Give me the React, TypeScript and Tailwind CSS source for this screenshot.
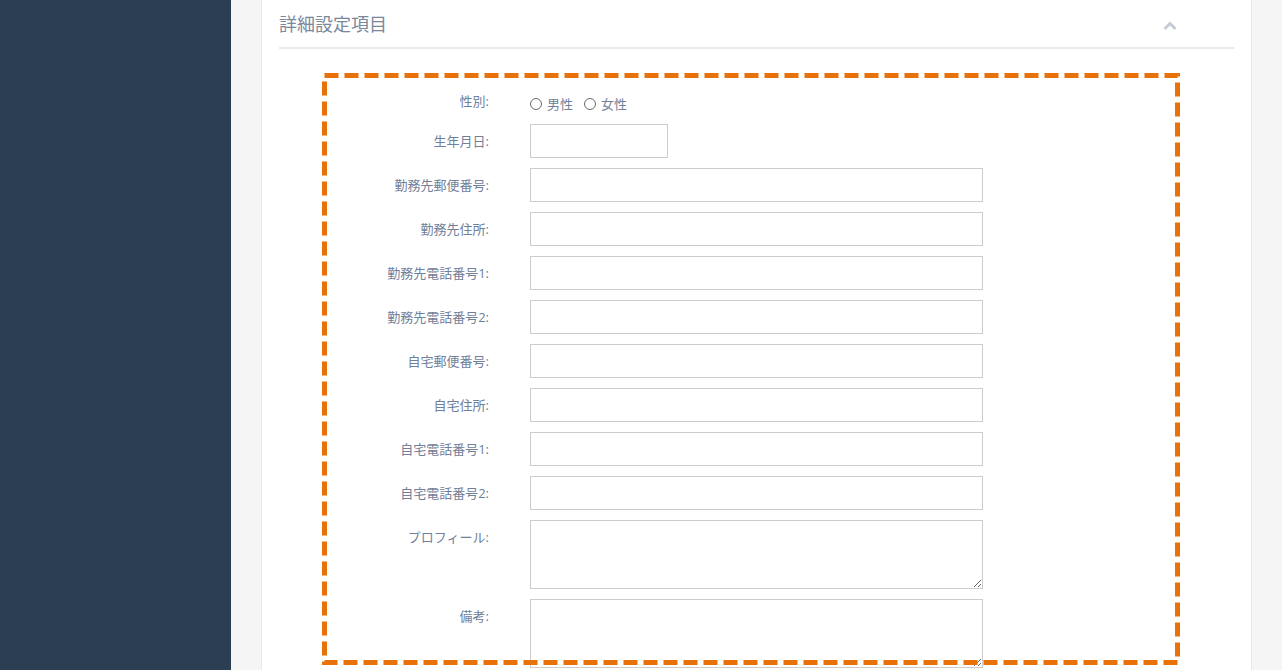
import React from "react";

const font = { fontFamily: '"Open Sans", "Noto Sans CJK JP", sans-serif' };

const inputRows = [
  "勤務先郵便番号:",
  "勤務先住所:",
  "勤務先電話番号1:",
  "勤務先電話番号2:",
  "自宅郵便番号:",
  "自宅住所:",
  "自宅電話番号1:",
  "自宅電話番号2:",
];

function Label({ text }: { text: string }) {
  return (
    <div className="w-[167px] shrink-0 text-right text-[13px] leading-[18px] pt-[8px] text-[#71809a]">
      {text}
    </div>
  );
}

function Radio({ label }: { label: string }) {
  return (
    <span className="flex items-center gap-[5px]">
      <span className="w-[12px] h-[12px] rounded-full border border-[#6b6b6b] bg-white" />
      <span className="text-[13px] leading-[18px] text-[#71809a] pt-[1px]">{label}</span>
    </span>
  );
}

export default function App() {
  return (
    <div className="flex h-[670px] w-[1282px] overflow-hidden" style={font}>
      <div className="w-[231px] shrink-0 bg-[#2b3e52]" />
      <div className="flex-1 bg-[#f5f5f5] px-[30px]">
        <div className="h-full bg-white border-x border-[#e8e8e8] px-[17px]">
          <div className="h-[47px] flex items-center justify-between border-b-2 border-[#e7eaee] box-content">
            <span className="text-[18px] text-[#7a889b] pt-[2px]">詳細設定項目</span>
            <svg width="14" height="10" viewBox="0 0 14 10" className="mr-[57px] mt-[4px]">
              <polyline points="1.5,8 7,2.5 12.5,8" fill="none" stroke="#c6ccd4" strokeWidth="3" />
            </svg>
          </div>
          <div className="relative ml-[43px] mr-[54px] mt-[24px] h-[592px] pt-[11px]">
            <div className="flex flex-col gap-[10px]">
              <div className="flex h-[30px]">
                <Label text="性別:" />
                <div className="ml-[41px] pt-[10px] flex items-start gap-[11px]">
                  <Radio label="男性" />
                  <Radio label="女性" />
                </div>
              </div>
              <div className="flex">
                <Label text="生年月日:" />
                <input className="ml-[41px] w-[138px] h-[34px] border border-[#cccccc] bg-white outline-none" />
              </div>
              {inputRows.map((r) => (
                <div key={r} className="flex">
                  <Label text={r} />
                  <input className="ml-[41px] w-[453px] h-[34px] border border-[#cccccc] bg-white outline-none" />
                </div>
              ))}
              <div className="flex">
                <Label text="プロフィール:" />
                <textarea className="ml-[41px] w-[453px] h-[69px] border border-[#cccccc] bg-white outline-none block" />
              </div>
              <div className="flex">
                <Label text="備考:" />
                <textarea className="ml-[41px] w-[453px] h-[69px] border border-[#cccccc] bg-white outline-none block" />
              </div>
            </div>
            <svg className="absolute inset-0 pointer-events-none" width="858" height="592">
              <rect x="2.5" y="2.5" width="853" height="587" fill="none" stroke="#e8710a" strokeWidth="5" strokeDasharray="14 6" />
            </svg>
          </div>
        </div>
      </div>
    </div>
  );
}
